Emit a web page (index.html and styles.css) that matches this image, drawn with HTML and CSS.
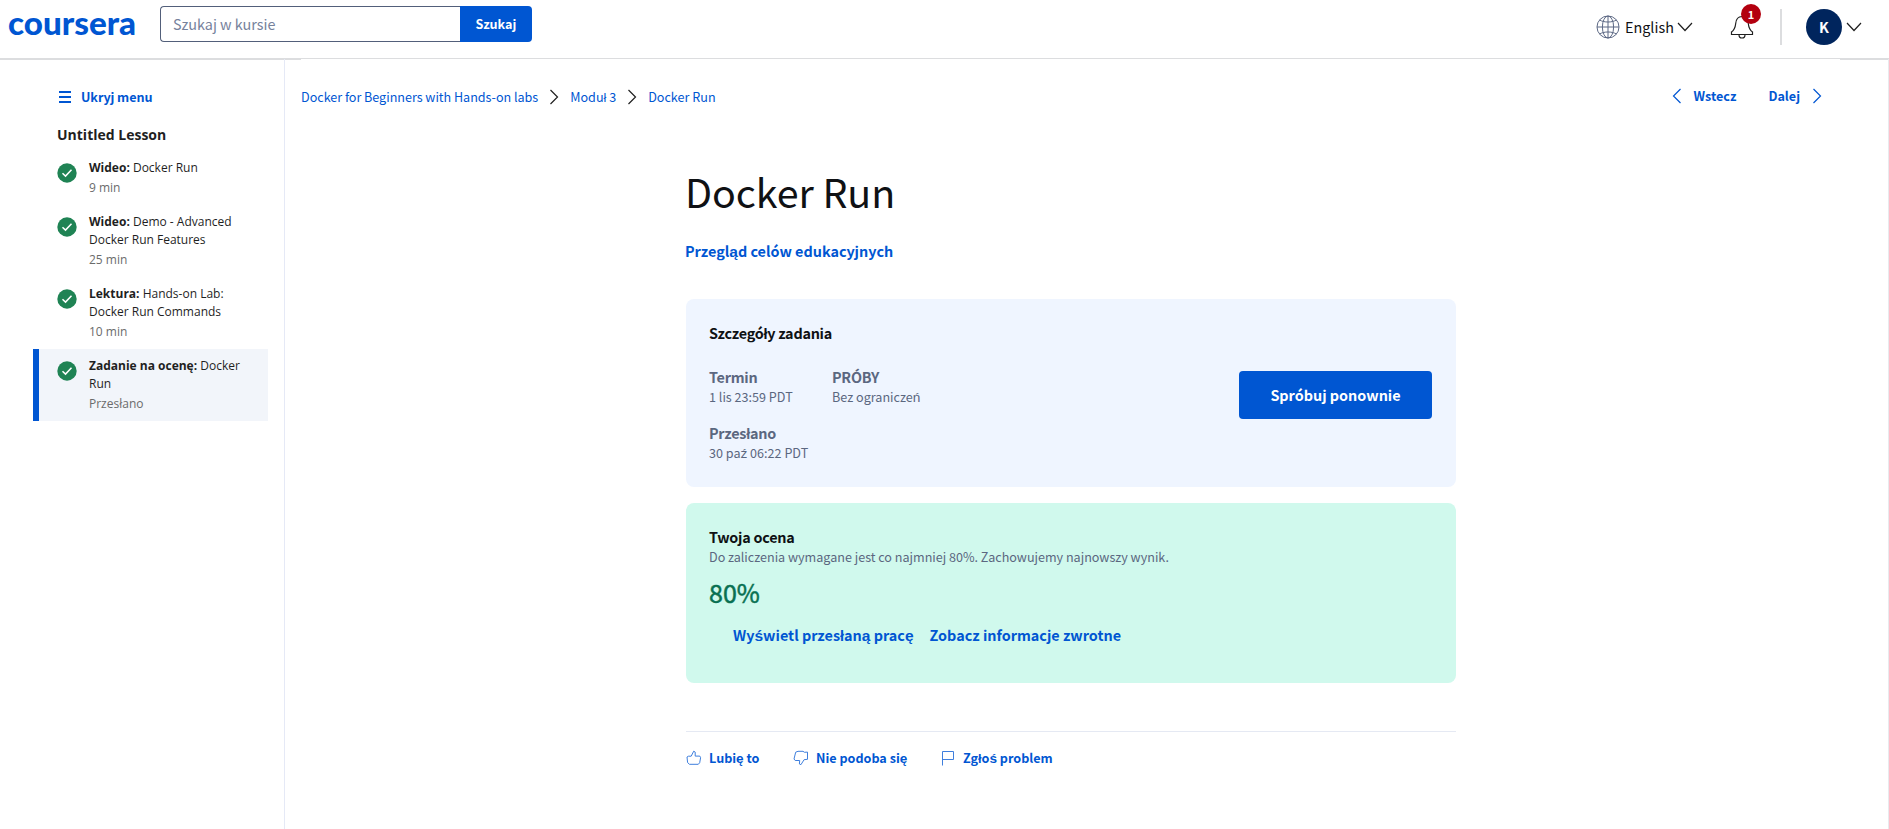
FILE: index.html
```html
<!DOCTYPE html>
<html lang="pl">
<head>
<meta charset="utf-8">
<title>Docker Run</title>
<link rel="stylesheet" href="styles.css">
</head>
<body>
<header class="topbar">
  <svg class="logo" viewBox="0 0 130 44" role="img" aria-label="coursera"><text x="0" y="29" textLength="128" lengthAdjust="spacingAndGlyphs">coursera</text></svg>
  <form class="search">
    <div class="search-field">Szukaj w kursie</div>
    <div class="search-button">Szukaj</div>
  </form>
  <div class="tools">
    <svg class="globe" viewBox="0 0 24 24"><circle cx="12" cy="12" r="11"/><ellipse cx="12" cy="12" rx="5.6" ry="11"/><path d="M12 1v22M1 12h22M3.600 5c4.500 2.700 12.300 2.700 16.800 0M3.600 19c4.500-2.700 12.300-2.700 16.800 0"/></svg>
    <span class="lang">English</span>
    <svg class="caret caret-lang" viewBox="0 0 16 10"><path d="M1 1l7 7.500L15 1"/></svg>
    <div class="bell-box">
      <svg class="bell" viewBox="0 0 24 26"><path d="M1.500 20.500v-2.600c3-1.800 3.800-4.600 4.200-8.400C6.100 5 8.700 2.500 12 2.500s5.900 2.500 6.300 7c.4 3.800 1.200 6.600 4.200 8.400v2.600zM9 20.700c0 4.400 6 4.400 6 0"/></svg>
      <span class="badge">1</span>
    </div>
    <div class="rule"></div>
    <div class="avatar">K</div>
    <svg class="caret" viewBox="0 0 16 10"><path d="M1 1l7 7.500L15 1"/></svg>
  </div>
</header>
<div class="layout">
  <aside class="sidebar">
    <div class="toggle"><span class="burger"></span><span class="toggle-text">Ukryj menu</span></div>
    <h2 class="lesson">Untitled Lesson</h2>
    <ul class="items">
      <li class="item"><svg class="check" viewBox="0 0 20 20"><circle cx="10" cy="10" r="9.700"/><path d="M5.500 10.300l3 2.800 6-6.300"/></svg><div class="item-text"><div><b>Wideo:</b> Docker Run</div><div class="meta">9 min</div></div></li>
      <li class="item"><svg class="check" viewBox="0 0 20 20"><circle cx="10" cy="10" r="9.700"/><path d="M5.500 10.300l3 2.800 6-6.300"/></svg><div class="item-text"><div><b>Wideo:</b> Demo - Advanced<br>Docker Run Features</div><div class="meta">25 min</div></div></li>
      <li class="item"><svg class="check" viewBox="0 0 20 20"><circle cx="10" cy="10" r="9.700"/><path d="M5.500 10.300l3 2.800 6-6.300"/></svg><div class="item-text"><div><b>Lektura:</b> Hands-on Lab:<br>Docker Run Commands</div><div class="meta">10 min</div></div></li>
      <li class="item current"><svg class="check" viewBox="0 0 20 20"><circle cx="10" cy="10" r="9.700"/><path d="M5.500 10.300l3 2.800 6-6.300"/></svg><div class="item-text"><div><b>Zadanie na ocenę:</b> Docker<br>Run</div><div class="meta">Przesłano</div></div></li>
    </ul>
  </aside>
  <main class="main">
    <nav class="crumbs">
      <a class="crumb-course">Docker for Beginners with Hands-on labs</a>
      <svg class="chev dark" viewBox="0 0 10 16"><path d="M1.500 1l7 7-7 7"/></svg>
      <a class="crumb-module">Moduł 3</a>
      <svg class="chev dark" viewBox="0 0 10 16"><path d="M1.500 1l7 7-7 7"/></svg>
      <a>Docker Run</a>
      <div class="pager">
        <svg class="chev" viewBox="0 0 10 16"><path d="M8.500 1l-7 7 7 7"/></svg>
        <a class="prev">Wstecz</a>
        <a class="next">Dalej</a>
        <svg class="chev" viewBox="0 0 10 16"><path d="M1.500 1l7 7-7 7"/></svg>
      </div>
    </nav>
    <article class="content">
      <h1 class="title">Docker Run</h1>
      <a class="goals">Przegl<span class="alt">ą</span>d celów edukacyjnych</a>
      <section class="card details">
        <h3 class="card-title">Szczegóły zadania</h3>
        <div class="details-row">
          <div class="facts">
            <div class="fact"><div class="label">Termin</div><div class="value">1 lis 23:59 PDT</div></div>
            <div class="fact"><div class="label">PRÓBY</div><div class="value">Bez ogranicze<span class="alt">ń</span></div></div>
            <div class="fact"><div class="label">Przesłano</div><div class="value">30 pa<span class="alt">ź</span> 06:22 PDT</div></div>
          </div>
          <div class="retry">Spróbuj ponownie</div>
        </div>
      </section>
      <section class="card grade">
        <h3 class="card-title">Twoja ocena</h3>
        <div class="value pass">Do zaliczenia wymagane jest co najmniej 80%. Zachowujemy najnowszy wynik.</div>
        <div class="score">80%</div>
        <div class="links"><a>Wy<span class="alt">ś</span>wietl przesłan<span class="alt">ą</span> prac<span class="alt">ę</span></a><a>Zobacz informacje zwrotne</a></div>
      </section>
      <footer class="feedback">
        <div class="action a-like"><svg class="act" viewBox="0 0 16 16"><path d="M1 7l1.500-.8h2.700L7.700 1.200l1.500.9v4h4.600l.8 1.600-.9 5-1.400 1.600H3.500L1.600 12.600z"/></svg><span>Lubi<span class="alt">ę</span> to</span></div>
        <div class="action a-dislike"><svg class="act" viewBox="0 0 16 16"><path d="M1 9L2.700 2.200 5 1.300h5l1.500 1 3-.2v7.200l-3.400.4-3.200 5-1.500-.7.3-3.500H2.200z"/></svg><span>Nie podoba si<span class="alt">ę</span></span></div>
        <div class="action"><svg class="act" viewBox="0 0 16 16"><path d="M2.500 15.500V1.500h11v8h-11"/></svg><span>Zgło<span class="alt">ś</span> problem</span></div>
      </footer>
    </article>
  </main>
</div>
</body>
</html>
```
FILE: styles.css
```css
* { box-sizing: border-box; }
html, body { height: 100%; }
body {
  margin: 0;
  overflow: hidden;
  background: #fff;
  color: #0f1114;
  font-family: "Noto Sans CJK SC", "Liberation Sans", sans-serif;
  font-size: 12.6px;
  line-height: 20px;
}
h1, h2, h3, ul { margin: 0; padding: 0; font-weight: inherit; }
svg { display: block; flex: none; fill: none; }
a { color: #0056d2; white-space: nowrap; }
.alt { font-family: "Liberation Sans", sans-serif; font-size: 1.08em; line-height: 1; }

.topbar {
  display: flex;
  height: 59px;
  padding: 6px 27px 0 8px;
  border-bottom: 1px solid #dcdddf;
}
.logo { width: 130px; height: 44px; overflow: visible; }
.logo text { font: 900 32px Lato, sans-serif; fill: #0056d2; }
.search { display: flex; height: 36px; margin-left: 22px; }
.search-field {
  width: 300px;
  padding-left: 12px;
  border: 1px solid #525f7a;
  border-right: 0;
  border-radius: 4px 0 0 4px;
  color: #76829c;
  font-size: 14.4px;
  line-height: 34px;
}
.search-button {
  width: 72px;
  border-radius: 0 4px 4px 0;
  background: #0056d2;
  color: #fff;
  font-weight: 700;
  line-height: 35px;
  text-align: center;
}
.tools { display: flex; align-items: center; height: 42px; margin-left: auto; }
.globe { width: 24px; height: 24px; stroke: #5d6985; }
.lang { margin-left: 5px; width: 48px; font-size: 14.4px; white-space: nowrap; }
.caret { width: 16px; height: 10px; stroke: #1f1f1f; stroke-width: 1.2; margin-left: 4px; }
.bell-box { position: relative; margin-left: 37px; width: 24px; height: 26px; }
.bell { width: 24px; height: 26px; stroke: #1f1f1f; stroke-width: 1.2; }
.badge {
  position: absolute;
  left: 11px;
  top: -10px;
  width: 20px;
  height: 20px;
  border-radius: 50%;
  background: #b3000f;
  color: #fff;
  font-size: 11px;
  font-weight: 700;
  text-align: center;
}
.rule { width: 2px; height: 36px; margin: 0 24px 0 26px; background: #dcdddf; }
.avatar {
  width: 36px;
  height: 36px;
  border-radius: 50%;
  background: #00255d;
  color: #fff;
  font-size: 14.4px;
  font-weight: 700;
  line-height: 36px;
  text-align: center;
}

.layout {
  display: flex;
  height: calc(100% - 59px);
  border-right: 1px solid #e8eaee;
  background:
    linear-gradient(#dcdddf, #dcdddf) 0 0 / 301px 1px no-repeat,
    linear-gradient(#dcdddf, #dcdddf) 100% 0 / 48px 1px no-repeat;
}
.sidebar { width: 285px; border-right: 1px solid #e5e9f6; padding: 28px 16px 0 33px; font-family: "Open Sans", sans-serif; }
.toggle { display: flex; align-items: center; height: 20px; padding-left: 26px; }
.burger { width: 12px; height: 12px; border-top: 2px solid #0056d2; border-bottom: 2px solid #0056d2; background: linear-gradient(#0056d2, #0056d2) 0 3px / 12px 2px no-repeat; }
.toggle-text { margin-left: 10px; color: #0056d2; font: 700 12.6px/20px "Noto Sans CJK SC", sans-serif; letter-spacing: -.07px; }
.lesson { margin: 18px 0 6px 24px; font-size: 14px; font-weight: 700; line-height: 20px; color: #1f1f1f; }
.items { list-style: none; }
.item { display: flex; padding: 4px 0 8px 24px; font-size: 12px; line-height: 18px; color: #1f1f1f; white-space: nowrap; }
.check { width: 20px; height: 20px; margin: 8px 12px 0 0; }
.check circle { fill: #1f8354; }
.check path { stroke: #fff; stroke-width: 1.5; }
.item-text { padding-top: 4px; }
.meta { margin-top: 2px; color: #6b6b6b; }
.item.current { height: 72px; padding-left: 18px; border-left: 6px solid #0056d2; background: #f2f5fa; }

.main { flex: 1; min-width: 0; }
.crumbs { display: flex; align-items: center; height: 20px; margin: 28px 66px 0 16px; }
.crumb-course { letter-spacing: -.03px; }
.chev { width: 10px; height: 16px; stroke: #0056d2; stroke-width: 1.2; }
.chev.dark { stroke: #1f1f1f; margin: 0 11px; }
.pager { display: flex; align-items: center; height: 20px; margin: -2px 0 0 auto; font-weight: 700; }
.prev { margin: 0 32px 0 12px; }
.next { margin-right: 12px; }

.content { width: 770px; margin: 54px 0 0 401px; }
.title { margin-left: -1px; font-size: 39.4px; font-weight: 400; line-height: 60px; letter-spacing: -.08px; }
.goals { display: block; margin: 20px 0 0 -1px; font-size: 14.4px; font-weight: 700; line-height: 20px; }
.card { border-radius: 8px; padding: 24px 24px 24px 23px; }
.details { height: 188px; margin-top: 38px; background: #eff5ff; }
.card-title { font-size: 14.4px; font-weight: 700; line-height: 20px; letter-spacing: -.25px; }
.details-row { display: flex; justify-content: space-between; margin-top: 24px; }
.facts { display: grid; grid-template-columns: 123px 123px; row-gap: 16px; }
.label { color: #5b6780; font-size: 14.4px; font-weight: 700; line-height: 20px; letter-spacing: -.25px; }
.value { color: #5b6780; line-height: 20px; white-space: nowrap; }
.pass { letter-spacing: -.015px; }
.retry {
  width: 193px;
  height: 48px;
  margin-top: 4px;
  border-radius: 4px;
  background: #0056d2;
  color: #fff;
  font-size: 14.4px;
  font-weight: 700;
  line-height: 48px;
  text-align: center;
}
.grade { height: 180px; margin-top: 16px; background: #d0f9ed; }
.score { margin-top: 7px; color: #087051; font-size: 25px; line-height: 36px; -webkit-text-stroke: .5px #087051; }
.links { display: flex; gap: 16px; padding: 15px 0 0 24px; font-size: 14.4px; font-weight: 700; }
.feedback { display: flex; margin-top: 48px; padding-top: 16px; border-top: 1px solid #e5e9f3; }
.action { display: flex; align-items: center; color: #0056d2; font-weight: 700; white-space: nowrap; }
.act { width: 16px; height: 16px; margin-right: 7px; stroke: #3f7fdd; }
.a-like { width: 107px; }
.a-dislike { width: 147px; }
```
